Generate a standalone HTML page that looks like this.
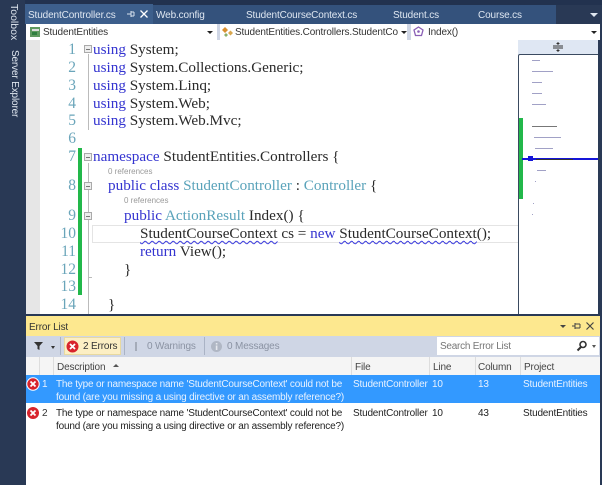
<!DOCTYPE html>
<html><head><meta charset="utf-8"><style>
html,body{margin:0;padding:0}
body{width:602px;height:485px;position:relative;overflow:hidden;background:#293955;font-family:"Liberation Sans",sans-serif}
div,span.a{position:absolute;white-space:pre}
.ui{font-size:10px;letter-spacing:-.15px;color:#333;line-height:14px;transform:translateY(1px)}
.tab{font-size:10px;letter-spacing:-.12px;color:#dfe7f1;line-height:14px;top:8px;transform:translateY(1px)}
.ln{left:40px;width:36px;text-align:right;color:#6aa5ba;font:15.5px/18px "Liberation Serif",serif;transform:translateY(1px)}
.c{font:15.2px/18px "Liberation Serif",serif;color:#2a2a2a;transform:translateY(1px)}
.k{color:#3434d0}.t{color:#5aa3ba}
.ref{font-size:8px;color:#999;line-height:10px}
.box{left:84px;width:6px;height:6px;border:1px solid #aaa;background:#eee}
.box:after{content:"";position:absolute;left:1px;top:2.5px;width:4px;height:1px;background:#777}
.sq{text-decoration:underline wavy #3a3ae0 1px;text-underline-offset:2px}
.m{height:1px;background:#8a8ab8;opacity:.8}
.row{font-size:10px;letter-spacing:-.19px;line-height:13px;transform:translateY(1px)}
</style></head><body>
<div style="left:0;top:0;width:602px;height:5px;background:#22324f"></div>
<div style="left:25px;top:5px;width:531px;height:19px;background:#34527c"></div>
<div style="left:25px;top:4px;width:128px;height:20px;background:#3d5f8c"></div>
<div style="left:0;top:0;width:25px;height:485px;background:#293955"></div>
<div style="left:8px;top:4px;color:#dfe6ef;font-size:10.5px;line-height:12px;writing-mode:vertical-rl">Toolbox</div>
<div style="left:8px;top:50px;color:#dfe6ef;font-size:10px;letter-spacing:-.15px;line-height:12px;writing-mode:vertical-rl">Server Explorer</div>

<div class="tab" style="left:28px">StudentController.cs</div>
<svg style="position:absolute;left:125px;top:9px" width="10" height="10"><path d="M2 5H6M6 2V8M6 3H9M6 7H9M9 3V7" stroke="#d8e2ee" fill="none"/></svg>
<svg style="position:absolute;left:139px;top:9px" width="10" height="10"><path d="M1.5 1.5L8.5 8.5M8.5 1.5L1.5 8.5" stroke="#fff" stroke-width="1.3"/></svg>
<div class="tab" style="left:156px">Web.config</div>
<div class="tab" style="left:246px">StudentCourseContext.cs</div>
<div class="tab" style="left:393px">Student.cs</div>
<div class="tab" style="left:478px">Course.cs</div>
<div style="left:590px;top:13px;width:0;height:0;border:4px solid transparent;border-top:4px solid #dfe6ef;border-bottom:0"></div>

<div style="left:26px;top:24px;width:574px;height:16px;background:#cfd6e5"></div>
<div style="left:26px;top:24px;width:191px;height:16px;background:#fff"></div>
<div style="left:220px;top:24px;width:187px;height:16px;background:#fff"></div>
<div style="left:411px;top:24px;width:189px;height:16px;background:#fff"></div>
<svg style="position:absolute;left:29px;top:26px" width="12" height="12"><rect x="1" y="1" width="10" height="10" fill="#5f9a5f"/><rect x="3" y="3" width="7" height="2" fill="#ddd"/><rect x="3" y="6" width="5" height="3" fill="#2f7f3f"/></svg>
<div class="ui" style="left:43px;top:25px">StudentEntities</div>
<svg style="position:absolute;left:221px;top:25px" width="13" height="13"><path d="M1 5L4 2L7 5L4 8Z" fill="#d9902f"/><path d="M7 8L9.5 5.5L12 8L9.5 10.5Z" fill="#d9a84f"/><path d="M3 10L5 8L7 10L5 12Z" fill="#8bb06a"/></svg>
<div class="ui" style="left:235px;top:25px">StudentEntities.Controllers.StudentCo</div>
<svg style="position:absolute;left:413px;top:26px" width="11" height="11"><path d="M5.5 1L10 4L8.5 9.5H2.5L1 4Z" fill="#fff" stroke="#8a5fb5" stroke-width="1.3"/><circle cx="5.5" cy="5.5" r="1.3" fill="#8a5fb5"/></svg>
<div class="ui" style="left:428px;top:25px">Index()</div>
<div style="left:207px;top:31px;border:3px solid transparent;border-top:3px solid #222;border-bottom:0"></div>
<div style="left:401px;top:31px;border:3px solid transparent;border-top:3px solid #222;border-bottom:0"></div>
<div style="left:591px;top:31px;border:3px solid transparent;border-top:3px solid #222;border-bottom:0"></div>

<div style="left:26px;top:40px;width:574px;height:274px;background:#fff"></div>
<div style="left:26px;top:40px;width:14px;height:274px;background:#e6e6e6"></div>

<div class="ln" style="top:40px">1</div><div class="ln" style="top:58px">2</div><div class="ln" style="top:76px">3</div><div class="ln" style="top:94px">4</div><div class="ln" style="top:111px">5</div><div class="ln" style="top:129px">6</div><div class="ln" style="top:147px">7</div><div class="ln" style="top:176px">8</div><div class="ln" style="top:206px">9</div><div class="ln" style="top:224px">10</div><div class="ln" style="top:242px">11</div><div class="ln" style="top:260px">12</div><div class="ln" style="top:277px">13</div><div class="ln" style="top:295px">14</div>

<div style="left:78px;top:148px;width:4px;height:147px;background:#22b84a"></div>
<div style="left:88px;top:54px;width:1px;height:76px;background:#bbb"></div>
<div style="left:88px;top:163px;width:1px;height:151px;background:#bbb"></div>
<div style="left:88px;top:277px;width:4px;height:1px;background:#bbb"></div>
<div class="box" style="top:45px"></div><div class="box" style="top:153px"></div><div class="box" style="top:182px"></div><div class="box" style="top:212px"></div>

<div style="left:92px;top:225px;width:426px;height:16px;border:1px solid #e4e4e4;border-right:0;box-sizing:content-box"></div>

<div class="c" style="left:93px;top:40px"><span class="k">using</span> System;</div>
<div class="c" style="left:93px;top:58px"><span class="k">using</span> System.Collections.Generic;</div>
<div class="c" style="left:93px;top:76px"><span class="k">using</span> System.Linq;</div>
<div class="c" style="left:93px;top:94px"><span class="k">using</span> System.Web;</div>
<div class="c" style="left:93px;top:111px"><span class="k">using</span> System.Web.Mvc;</div>
<div class="c" style="left:93px;top:147px"><span class="k">namespace</span> StudentEntities.Controllers {</div>
<div class="ref" style="left:108px;top:167px">0 references</div>
<div class="c" style="left:108px;top:176px"><span class="k">public class</span> <span class="t">StudentController</span> : <span class="t">Controller</span> {</div>
<div class="ref" style="left:124px;top:196px">0 references</div>
<div class="c" style="left:124px;top:206px"><span class="k">public</span> <span class="t">ActionResult</span> Index() {</div>
<div class="c" style="left:140px;top:224px"><span class="sq">StudentCourseContext</span> cs = <span class="k">new</span> <span class="sq">StudentCourseContext</span>();</div>
<div class="c" style="left:140px;top:242px"><span class="k">return</span> View();</div>
<div class="c" style="left:124px;top:260px">}</div>
<div class="c" style="left:108px;top:295px">}</div>

<div style="left:518px;top:40px;width:82px;height:15px;background:#dfe7f3"></div>
<svg style="position:absolute;left:553px;top:41px" width="11" height="12"><path d="M0 5H10M0 7H10M5 1V4M5 8V11M3.5 2.5H6.5M3.5 9.5H6.5" stroke="#333" fill="none"/></svg>
<div style="left:518px;top:54px;width:80px;height:260px;border:1px solid #3a4a60;border-bottom:0;border-radius:2px 2px 0 0;background:#fff"></div>
<div style="left:598px;top:40px;width:2px;height:274px;background:#2a3a55"></div>
<div style="left:519px;top:118px;width:4px;height:81px;background:#22b84a"></div>
<div class="m" style="left:532px;top:60px;width:8px"></div><div class="m" style="left:532px;top:71px;width:21px"></div><div class="m" style="left:532px;top:82px;width:10px"></div><div class="m" style="left:532px;top:93px;width:10px"></div><div class="m" style="left:532px;top:104px;width:14px"></div>
<div class="m" style="left:532px;top:126px;width:25px;background:#555"></div><div class="m" style="left:534px;top:137px;width:27px"></div><div class="m" style="left:535px;top:148px;width:18px"></div><div class="m" style="left:537px;top:170px;width:9px"></div>
<div class="m" style="left:535px;top:181px;width:1px"></div><div class="m" style="left:533px;top:203px;width:1px"></div><div class="m" style="left:532px;top:214px;width:1px"></div>
<div style="left:522px;top:158px;width:76px;height:2px;background:#1515d8"></div>
<div style="left:528px;top:156px;width:5px;height:5px;background:#1515d8"></div>
<div style="left:536px;top:159px;width:37px;height:1px;background:#333"></div>

<div style="left:26px;top:314px;width:574px;height:2px;background:#293955"></div>
<div style="left:26px;top:316px;width:574px;height:20px;background:#fde88f"></div>
<div class="ui" style="left:29px;top:320px;color:#333">Error List</div>
<div style="left:560px;top:325px;border:3px solid transparent;border-top:3px solid #444;border-bottom:0"></div>
<svg style="position:absolute;left:571px;top:321px" width="10" height="10"><path d="M1 5H4M4 2V8M4 3H9M4 7H9M9 3V7" stroke="#444" fill="none"/></svg>
<svg style="position:absolute;left:585px;top:321px" width="10" height="10"><path d="M1.5 1.5L8.5 8.5M8.5 1.5L1.5 8.5" stroke="#444" stroke-width="1.2"/></svg>

<div style="left:26px;top:336px;width:574px;height:21px;background:#cfd6e5"></div>
<svg style="position:absolute;left:34px;top:341px" width="10" height="10"><path d="M0 1H9L5.5 5V9L3.5 8V5Z" fill="#333"/></svg>
<div style="left:51px;top:346px;border:2.5px solid transparent;border-top:3px solid #333;border-bottom:0"></div>
<div style="left:60px;top:337px;width:1px;height:18px;background:#aab3c5"></div>
<div style="left:64px;top:337px;width:57px;height:18px;background:#fcefc4;border:1px solid #e8d9a0;box-sizing:border-box"></div>
<svg style="position:absolute;left:66px;top:340px" width="13" height="13"><circle cx="6.5" cy="6.5" r="6" fill="#d8242c"/><path d="M4 4L9 9M9 4L4 9" stroke="#fff" stroke-width="1.8"/></svg>
<div class="ui" style="left:83px;top:339px;color:#333">2 Errors</div>
<div style="left:124px;top:337px;width:1px;height:18px;background:#aab3c5"></div>
<div style="left:135px;top:342px;width:2px;height:9px;background:#a5acb9"></div>
<div class="ui" style="left:147px;top:339px;color:#8b93a3">0 Warnings</div>
<div style="left:204px;top:337px;width:1px;height:18px;background:#aab3c5"></div>
<svg style="position:absolute;left:210px;top:340px" width="13" height="13"><circle cx="6.5" cy="6.5" r="5.5" fill="#b0b7c4"/><rect x="5.8" y="5.5" width="1.6" height="4.5" fill="#e5e8ee"/><rect x="5.8" y="3" width="1.6" height="1.5" fill="#e5e8ee"/></svg>
<div class="ui" style="left:227px;top:339px;color:#8b93a3">0 Messages</div>
<div style="left:437px;top:337px;width:162px;height:18px;background:#fff"></div>
<div class="ui" style="left:440px;top:339px;color:#777;letter-spacing:-.25px">Search Error List</div>
<svg style="position:absolute;left:576px;top:340px" width="12" height="12"><circle cx="7" cy="4.5" r="3" fill="none" stroke="#333" stroke-width="1.6"/><path d="M5 7L1.5 10.5" stroke="#333" stroke-width="2"/></svg>
<div style="left:592px;top:345px;border:2.5px solid transparent;border-top:3px solid #555;border-bottom:0"></div>

<div style="left:26px;top:357px;width:574px;height:128px;background:#fff"></div>
<div style="left:26px;top:357px;width:574px;height:18px;background:#f5f5f5"></div>
<div style="left:39px;top:357px;width:1px;height:18px;background:#ddd"></div>
<div style="left:53px;top:357px;width:1px;height:18px;background:#ddd"></div>
<div style="left:351px;top:357px;width:1px;height:18px;background:#ddd"></div>
<div style="left:429px;top:357px;width:1px;height:18px;background:#ddd"></div>
<div style="left:475px;top:357px;width:1px;height:18px;background:#ddd"></div>
<div style="left:520px;top:357px;width:1px;height:18px;background:#ddd"></div>
<div class="ui" style="left:57px;top:360px;color:#444">Description</div>
<div style="left:113px;top:364px;border:3px solid transparent;border-bottom:3px solid #555;border-top:0"></div>
<div class="ui" style="left:355px;top:360px;color:#444">File</div>
<div class="ui" style="left:433px;top:360px;color:#444">Line</div>
<div class="ui" style="left:478px;top:360px;color:#444">Column</div>
<div class="ui" style="left:524px;top:360px;color:#444">Project</div>

<div style="left:26px;top:375px;width:574px;height:28px;background:#3399ff"></div>
<svg style="position:absolute;left:26px;top:377px" width="14" height="14"><circle cx="7" cy="7" r="6.2" fill="#d8242c" stroke="#fff" stroke-width="1"/><path d="M4.5 4.5L9.5 9.5M9.5 4.5L4.5 9.5" stroke="#fff" stroke-width="1.8"/></svg>
<svg style="position:absolute;left:26px;top:406px" width="14" height="14"><circle cx="7" cy="7" r="6" fill="#d8242c"/><path d="M4.5 4.5L9.5 9.5M9.5 4.5L4.5 9.5" stroke="#fff" stroke-width="1.8"/></svg>
<div class="row" style="left:42px;top:377px;color:#e8f2ff">1</div>
<div class="row" style="left:56px;top:377px;color:#e8f2ff">The type or namespace name 'StudentCourseContext' could not be
found (are you missing a using directive or an assembly reference?)</div>
<div class="row" style="left:353px;top:377px;color:#e8f2ff">StudentController</div>
<div class="row" style="left:432px;top:377px;color:#e8f2ff">10</div>
<div class="row" style="left:478px;top:377px;color:#e8f2ff">13</div>
<div class="row" style="left:523px;top:377px;color:#e8f2ff">StudentEntities</div>
<div class="row" style="left:42px;top:406px;color:#333">2</div>
<div class="row" style="left:56px;top:406px;color:#222">The type or namespace name 'StudentCourseContext' could not be
found (are you missing a using directive or an assembly reference?)</div>
<div class="row" style="left:353px;top:406px;color:#222">StudentController</div>
<div class="row" style="left:432px;top:406px;color:#222">10</div>
<div class="row" style="left:478px;top:406px;color:#222">43</div>
<div class="row" style="left:523px;top:406px;color:#222">StudentEntities</div>
<div style="left:600px;top:314px;width:2px;height:171px;background:#293955"></div>
</body></html>
